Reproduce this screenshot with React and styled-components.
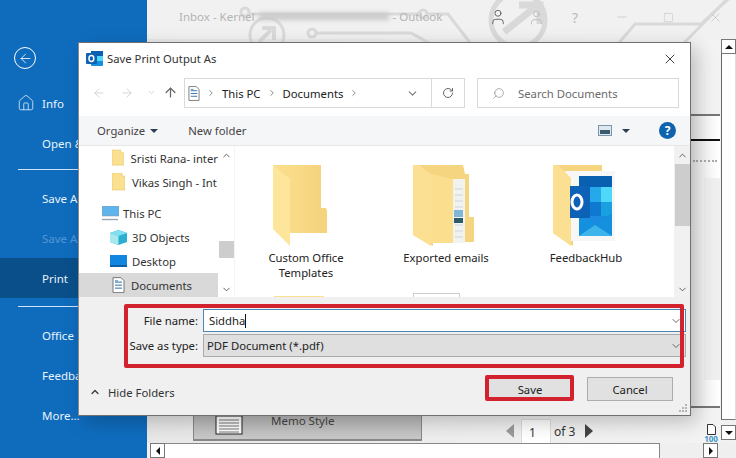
import React from 'react';
import styled, { createGlobalStyle } from 'styled-components';
import { ArrowLeft, ArrowRight, ArrowUp, ChevronDown, ChevronUp, Home, RotateCw, Search, X, User, Minus, Square, ChevronRight } from 'lucide-react';

const Global = createGlobalStyle`
  html, body { margin: 0; padding: 0; background: #f0f0f0; }
  * { box-sizing: border-box; }
  #root { width: 736px; height: 458px; overflow: hidden; }
`;

const Page = styled.div`
  position: relative; width: 736px; height: 458px; display: flex; overflow: hidden;
  font-family: "Noto Sans", "Open Sans", sans-serif; font-size: 11.3px; color: #222;
`;

/* backstage sidebar */
const Sidebar = styled.aside`
  width: 147px; flex: none; background: #0f6cbd; color: #e8f2fb; display: flex; flex-direction: column; padding-top: 47px; font-size: 11.5px;
`;
const BackButton = styled.div`
  width: 22px; height: 22px; margin: 0 0 14px 14px; border: 1.5px solid #fff; border-radius: 50%;
  display: flex; align-items: center; justify-content: center; color: #fff;
`;
const SideItem = styled.div`
  height: 40px; flex: none; display: flex; align-items: center; padding-left: 42px; position: relative;
  margin-top: ${p => p.$mt || 0}px;
  color: ${p => (p.$dim ? '#4f97d6' : '#e9f3fb')};
  background: ${p => (p.$active ? '#0a4f8a' : 'transparent')};
`;
const HomeIcon = styled.span`
  position: absolute; left: 17px; top: 11px; display: flex; color: #dcecf9;
`;
const SideRule = styled.div`
  height: 1px; background: #cfe3f5; margin: ${p => p.$m} 0 0 18px; flex: none;
`;

/* outlook window behind the dialog */
const Main = styled.main`
  flex: 1; display: flex; flex-direction: column; min-width: 0; background: #f1f1f1; position: relative;
`;
const TitleBar = styled.header`
  height: 39px; flex: none; position: relative; display: flex; align-items: flex-start; padding: 9px 0 0 32px;
  color: #b4b4b4; font-size: 11.5px;
`;
const TitleArt = styled.svg`
  position: absolute; left: 0; top: 0; width: 589px; height: 60px;
`;
const TitleText = styled.span`
  position: relative; white-space: nowrap; display: flex; align-items: center;
`;
const Blurred = styled.span`
  display: inline-block; width: 130px; height: 7px; margin: 0 4px; background: #c8c8c8; filter: blur(2.5px);
`;
const WinIcons = styled.div`
  position: absolute; top: 8px; left: 338px; display: flex; align-items: center; height: 18px; color: #b9b9b9; font-size: 14px;
`;
const WinIcon = styled.span`
  width: ${p => p.$w}px; flex: none; display: flex; justify-content: center; color: ${p => p.$c || 'inherit'};
`;
const PreviewRow = styled.div`
  flex: 1; display: flex; min-height: 0;
`;
const PreviewArea = styled.div`
  flex: 1; display: flex; flex-direction: column; min-width: 0;
  background: linear-gradient(90deg, #e8e8e8, #f3f3f3);
`;
const PageSliver = styled.div`
  height: 294px; margin-left: 544px; width: 29px; margin-top: 75px; background: linear-gradient(90deg,#ececec,#fff);
  border-bottom: 2px solid #777; flex: none;
`;
const PageLine = styled.div`
  height: ${p => p.$h}px; background: ${p => p.$c}; margin-top: ${p => p.$t}px;
`;
const PageDots = styled.div`
  height: 2px; margin: 19px 0 0 2px; width: 24px; border-top: 2px dotted #aaa;
`;
const PageBlock = styled.div`
  height: 202px; margin: 16px 0 0 13px; background: #efefef;
`;
const FootRow = styled.div`
  height: 30px; margin-top: auto; flex: none; display: flex; align-items: flex-start; position: relative;
`;
const MemoTab = styled.div`
  width: 229px; height: 28px; margin-left: 46px; background: linear-gradient(#b4b4b4, #c9c9c9);
  border: 1px solid #888; border-top: 0; border-bottom-width: 2px; display: flex; align-items: flex-start; padding: 3px 0 0 21px;
  color: #444; font-size: 11.5px; line-height: 10px;
`;
const MemoGlyph = styled.svg`
  width: 28px; height: 19px; margin-right: 28px; flex: none;
`;
const Pager = styled.div`
  display: flex; align-items: center; margin: 6px 0 0 84px; color: #333; font-size: 12px; height: 24px;
`;
const PagerArrow = styled.span`
  width: 0; height: 0; border-top: 7px solid transparent; border-bottom: 7px solid transparent;
  ${p => p.$left ? 'border-right: 8px solid #9a9a9a;' : 'border-left: 8px solid #444;'}
`;
const PagerBox = styled.span`
  width: 30px; height: 24px; background: #fff; border: 1px solid #ddd; border-bottom: 0; margin: 0 3px 0 7px; padding: 4px 0 0 7px;
`;
const PagerOf = styled.span`
  margin-right: 10px;
`;
const Zoomer = styled.div`
  position: absolute; left: 554px; top: 11px; width: 20px; display: flex; flex-direction: column; align-items: center;
  color: #3d93c8; font-size: 8px; font-weight: 700; line-height: 8px;
`;
const ScrollBarV = styled.div`
  width: 15px; flex: none; display: flex; flex-direction: column; padding-bottom: 3px;
`;
const ScrollTrack = styled.div`
  flex: 1; background: #fff; border-left: 1px solid #666; border-bottom: 1px solid #777; border-right: 1px solid #ddd; margin-bottom: 5px;
`;
const ScrollBtn = styled.div`
  width: 15px; height: 15px; flex: none; background: #fff; border: 1px solid #777; display: flex; align-items: center; justify-content: center;
`;
const Tri = styled.span`
  width: 0; height: 0;
  ${p => p.$d === 'up' && 'border-left:4px solid transparent;border-right:4px solid transparent;border-bottom:4px solid #111;'}
  ${p => p.$d === 'down' && 'border-left:4px solid transparent;border-right:4px solid transparent;border-top:4px solid #111;'}
  ${p => p.$d === 'left' && 'border-top:4px solid transparent;border-bottom:4px solid transparent;border-right:4px solid #111;'}
  ${p => p.$d === 'right' && 'border-top:4px solid transparent;border-bottom:4px solid transparent;border-left:4px solid #111;'}
`;
const ScrollBarH = styled.div`
  height: 15px; flex: none; display: flex; margin-left: 3px; background: #efefef;
`;
const HTrack = styled.div`
  width: 495px; background: #fff; border: 1px solid #888; border-left: 0; border-bottom: 0;
`;
const HSpacer = styled.div`
  width: 43px;
`;

/* dialog */
const Dialog = styled.section`
  position: absolute; left: 78px; top: 42px; width: 613px; height: 374px; background: #fff;
  border: 1px solid #6f6f6f; border-left-color: #8a8a8a; box-shadow: 6px 6px 18px rgba(0,0,0,.22);
  display: flex; flex-direction: column;
`;
const DialogTitle = styled.div`
  height: 31px; flex: none; display: flex; align-items: center; padding: 0 12px 0 7px; color: #333; gap: 4px;
`;
const TitleLabel = styled.span`
  flex: 1;
`;
const AddressRow = styled.div`
  height: 42px; flex: none; display: flex; align-items: flex-start; padding: 4px 11px 0 10px; color: #bbb;
`;
const NavBtn = styled.span`
  width: ${p => p.$w}px; height: 29px; display: flex; align-items: center; justify-content: center; color: ${p => p.$c || '#c4c4c4'};
`;
const AddressBox = styled.div`
  width: 281px; height: 30px; margin-left: 3px; border: 1px solid #d9d9d9; display: flex; align-items: center; padding-left: 3px; color: #222;
`;
const Crumb = styled.span`
  display: flex; color: #777; margin: 0 6px;
`;
const AddrEnd = styled.span`
  margin-left: auto; display: flex; align-items: center; height: 100%; color: #777;
`;
const AddrRefresh = styled.span`
  width: 33px; height: 100%; border-left: 1px solid #d9d9d9; margin-left: 12px; display: flex; align-items: center; justify-content: center; color: #666;
`;
const SearchBox = styled.div`
  width: 202px; height: 30px; margin-left: 12px; border: 1px solid #d9d9d9; display: flex; align-items: center; padding-left: 14px; gap: 13px; color: #6b6b6b;
`;
const Toolbar = styled.div`
  height: 30px; flex: none; background: #f5f6f7; border-bottom: 1px solid #e7e7e7; display: flex; align-items: center; padding: 0 14px 0 18px; color: #444;
`;
const Caret = styled.span`
  width: 0; height: 0; border-left: 4px solid transparent; border-right: 4px solid transparent; border-top: 4px solid #2c3e55; margin-left: ${p => p.$ml}px;
`;
const ToolNew = styled.span`
  margin-left: 30px; margin-right: auto;
`;
const ViewIcon = styled.svg`
  width: 14px; height: 11px; flex: none;
`;
const HelpBadge = styled.span`
  width: 17px; height: 17px; border-radius: 50%; background: #0d63ad; color: #fff; font-weight: 700; font-size: 12px; display: flex; align-items: center; justify-content: center; margin-left: 29px;
`;
const Body = styled.div`
  flex: 1; min-height: 0; display: flex; overflow: hidden;
`;
const Nav = styled.nav`
  width: 139px; flex: none; margin-right: 1px; display: flex; flex-direction: column; overflow: hidden;
`;
const NavRow = styled.div`
  height: 24px; flex: none; display: flex; align-items: center; padding-left: ${p => p.$pl}px; gap: ${p => p.$gap || 5}px; white-space: nowrap; overflow: hidden;
  margin-top: ${p => p.$mt || 0}px; color: #333;
  background: ${p => (p.$sel ? '#d9d9d9' : 'transparent')};
`;
const NavScroll = styled.div`
  width: 15px; flex: none; background: #fff; display: flex; flex-direction: column; align-items: center; color: #555; padding: 4px 0 2px;
`;
const NavThumb = styled.div`
  width: 15px; height: 17px; background: #cdcdcd; margin: 80px 0 auto;
`;
const Files = styled.div`
  flex: 1; min-width: 0; display: grid; grid-template-columns: repeat(3, 140px); grid-auto-rows: 147px; padding: 0 0 0 1px; overflow: hidden; border-left: 1px solid #f4f4f4;
`;
const FileCell = styled.div`
  display: flex; flex-direction: column; align-items: center; padding-top: ${p => p.$top ?? 19}px; text-align: center; line-height: 15px; color: #222;
`;
const FileIcon = styled.div`
  height: 81px; margin-right: ${p => p.$shift || 0}px; flex: none; display: flex;
`;
const FileLabel = styled.span`
  margin-top: 4px;
`;
const FileScroll = styled.div`
  width: 16px; flex: none; background: #f1f1f1; display: flex; flex-direction: column; align-items: center; color: #555; padding: 4px 0 2px;
`;
const FileThumb = styled.div`
  width: 15px; height: 62px; background: #cdcdcd; margin: 3px 0 auto;
`;
const Bottom = styled.div`
  height: 118px; flex: none; background: #f0f0f0; position: relative; padding: 12px 0 0 0;
`;
const FieldRow = styled.div`
  display: flex; align-items: center; height: 23px; margin-bottom: 2px;
`;
const FieldLabel = styled.label`
  width: 119px; text-align: right; color: #222; flex: none;
`;
const NameInput = styled.div`
  width: 483px; height: 23px; margin-left: 5px; background: #fff; border: 1px solid #4a86b8; display: flex; align-items: center; padding-left: 5px; justify-content: space-between; color: #222;
`;
const Cursor = styled.span`
  display: inline-block; width: 1px; height: 14px; background: #111; vertical-align: -3px;
`;
const TypeSelect = styled(NameInput)`
  background: #dfdfdf; border-color: #aaa; padding-left: 3px;
`;
const SelectCaret = styled.span`
  display: flex; color: #666; margin-right: 3px;
`;
const ButtonRow = styled.div`
  display: flex; align-items: center; margin-top: 20px; padding: 0 17px 0 10px; height: 24px;
`;
const HideFolders = styled.div`
  display: flex; align-items: center; gap: 7px; margin-right: auto; color: #333; margin-top: 6px;
`;
const DlgButton = styled.button`
  width: 86px; height: 24px; background: #e1e1e1; border: 1px solid #adadad; font: inherit; color: #222; padding: 0; margin-left: ${p => p.$ml || 0}px;
`;
const RedBox = styled.div`
  position: absolute; left: ${p => p.$l}px; top: ${p => p.$t}px; width: ${p => p.$w}px; height: ${p => p.$h}px;
  border: 4px solid #d1222e; border-radius: 2px; pointer-events: none;
`;
const Grip = styled.svg`
  position: absolute; right: 2px; bottom: 2px; width: 9px; height: 9px;
`;
const PeekFolder = styled.div`
  width: 50px; height: 2px; background: #fbdf8e; margin-right: 14px;
`;
const PeekPaper = styled.div`
  width: 47px; height: 5px; background: #fff; border: 1px solid #ccc; border-bottom: 0; margin-right: 20px;
`;

const Folder = () => (
  <svg width="54" height="81" viewBox="0 0 54 81">
    <defs>
      <linearGradient id="fa" x1="0" x2="1"><stop offset="0" stopColor="#fbe08f" /><stop offset="1" stopColor="#f5d27c" /></linearGradient>
    </defs>
    <path d="M0 0H48V43H53L54 46V68H17V81Z" fill="url(#fa)" />
    <path d="M0 0L17 14V81L0 64Z" fill="#fde59b" />
  </svg>
);
const FolderDocs = () => (
  <svg width="62" height="81" viewBox="0 0 62 81">
    <path d="M0 0H50L52 9H56V52H61V77H20V81L0 70Z" fill="#f6d581" />
    <path d="M0 0H6L18 9V81L0 70Z" fill="#fbe093" />
    <path d="M18 9 L40 14V78H18Z" fill="#fbdf8f" />
    <path d="M40 14H52V78H40Z" fill="#f2f2ee" />
    <path d="M42 24H50M42 30H50M42 36H50M42 42H50M42 60H50M42 66H50M42 72H50" stroke="#cfd5da" />
    <rect x="41" y="45" width="9" height="7" fill="#7fb6d8" />
    <rect x="41" y="53" width="9" height="5" fill="#2f5a6a" />
    <path d="M52 52H61V77H52Z" fill="#f6d581" />
  </svg>
);
const FolderOutlook = () => (
  <svg width="66" height="81" viewBox="0 0 66 81">
    <path d="M0 0H49V8H60V73H20V81L0 68Z" fill="#f6d581" />
    <path d="M12 6H62V76H18Z" fill="#f7f7f7" />
    <path d="M0 0H5L18 13V81L0 68Z" fill="#fbe093" />
    <rect x="26" y="11" width="33" height="60" rx="2" fill="#1a8be0" />
    <rect x="26" y="11" width="33" height="11" fill="#0a60b0" />
    <rect x="36" y="22" width="12" height="15" fill="#27a8ea" />
    <rect x="48" y="22" width="11" height="15" fill="#50d8fb" />
    <rect x="48" y="37" width="11" height="14" fill="#18a0e0" />
    <rect x="36" y="37" width="12" height="14" fill="#0f78d0" />
    <path d="M26 48 L42 60 L59 48 V71H26Z" fill="#1490df" />
    <path d="M42 60 L59 71 H26Z" fill="#3db4ea" />
    <rect x="17" y="21" width="20" height="32" fill="#0d62b8" />
    <ellipse cx="24" cy="37" rx="5" ry="7" fill="none" stroke="#fff" strokeWidth="3" />
  </svg>
);
const SmallFolder = () => (
  <svg width="13" height="18" viewBox="0 0 13 18"><path d="M0 0H10V3H13V17H0Z" fill="#fbe08f" stroke="#e6c670" strokeWidth=".6" /></svg>
);
const DocIcon = ({ size = 13 }) => (
  <svg width={size} height={size * 1.25} viewBox="0 0 13 16">
    <path d="M1 .5H9L12 3.5V15.5H1Z" fill="#fff" stroke="#777" />
    <path d="M3 5H10M3 8H10M3 11H10" stroke="#2f6fa8" />
    <rect x="3" y="3" width="3" height="1.5" fill="#67a7d6" />
  </svg>
);
const PcIcon = () => (
  <svg width="17" height="15" viewBox="0 0 17 15"><rect x="0" y="0" width="17" height="10" fill="#5fb4ec" stroke="#8a9aa8" strokeWidth=".6" /><path d="M0 13.5H16" stroke="#9aa6b0" strokeWidth="1.4" /></svg>
);
const CubeIcon = () => (
  <svg width="17" height="15" viewBox="0 0 17 15"><path d="M8.5 0L17 3V12L8.5 15L0 12V3Z" fill="#2aaed2" /><path d="M8.5 0L17 3L8.5 6L0 3Z" fill="#7fe0ef" /><path d="M0 3L8.5 6V15L0 12Z" fill="#a7e7ee" /></svg>
);
const DesktopIcon = () => (
  <svg width="17" height="13" viewBox="0 0 17 13"><rect width="17" height="12" fill="#1186e0" /><path d="M0 10H17V12H0Z" fill="#0d5fa8" /></svg>
);
const OutlookLogo = () => (
  <svg width="17" height="17" viewBox="0 0 17 17">
    <rect x="5" y="1" width="12" height="15" rx="1" fill="#1490df" />
    <rect x="5" y="1" width="12" height="5" fill="#0a60b0" />
    <rect x="11" y="6" width="6" height="5" fill="#50d8fb" />
    <rect x="0" y="3" width="11" height="11" rx="1" fill="#0f62b4" />
    <ellipse cx="5.4" cy="8.5" rx="2.4" ry="3" fill="none" stroke="#fff" strokeWidth="1.5" />
  </svg>
);

export default function App() {
  return (
    <Page>
      <Global />
      <Sidebar>
        <BackButton><ArrowLeft size={15} strokeWidth={1.3} /></BackButton>
        <SideItem><HomeIcon><Home size={18} strokeWidth={1.1} /></HomeIcon>Info</SideItem>
        <SideItem>Open &amp;</SideItem>
        <SideRule $m="6px" />
        <SideItem $mt={8}>Save A</SideItem>
        <SideItem $dim>Save A</SideItem>
        <SideItem $active>Print</SideItem>
        <SideRule $m="8px" />
        <SideItem $mt={8}>Office</SideItem>
        <SideItem>Feedba</SideItem>
        <SideItem>More...</SideItem>
      </Sidebar>
      <Main>
        <TitleBar>
          <TitleArt viewBox="0 0 589 60" fill="none">
            <g stroke="#d9d9d9" strokeWidth="3">
              <circle cx="120" cy="35" r="17" />
              <path d="M112 42L124 30M115 28H127V40" strokeWidth="4" />
              <path d="M165 33H264L284 44" />
              <circle cx="165" cy="33" r="4" fill="#f1f1f1" />
              <circle cx="98" cy="12" r="4" fill="#f1f1f1" />
              <path d="M102 14H301L324 44" />
              <circle cx="276" cy="14" r="4" fill="#f1f1f1" />
              <circle cx="371" cy="20" r="27" strokeWidth="5" />
              <path d="M357 32L391 5M372 5H393V24" strokeWidth="7" />
              <path d="M471 44L488 24H554L589 -8" />
              <path d="M536 44L589 -10" />
            </g>
          </TitleArt>
          <TitleText>Inbox - Kernel<Blurred />- Outlook</TitleText>
          <WinIcons>
            <WinIcon $w={25} $c="#666"><User size={18} strokeWidth={1.3} /></WinIcon>
            <WinIcon $w={52}><User size={17} strokeWidth={1.3} /></WinIcon>
            <WinIcon $w={26}>?</WinIcon>
            <WinIcon $w={68}><Minus size={14} strokeWidth={1} /></WinIcon>
            <WinIcon $w={24}><Square size={11} strokeWidth={1} /></WinIcon>
            <WinIcon $w={70}><X size={15} strokeWidth={1} /></WinIcon>
          </WinIcons>
        </TitleBar>
        <PreviewRow>
          <PreviewArea>
            <PageSliver>
              <PageLine $h={2} $c="#777" $t={0} />
              <PageLine $h={2} $c="#111" $t={23} />
              <PageDots />
              <PageBlock />
            </PageSliver>
            <FootRow>
              <MemoTab>
                <MemoGlyph viewBox="0 0 28 19"><rect x="1" y="0" width="26" height="18" fill="#fff" stroke="#222" /><path d="M4 4H24M4 7H24M4 10H24M4 13H24M4 16H24" stroke="#777" /></MemoGlyph>
                Memo Style
              </MemoTab>
              <Pager>
                <PagerArrow $left />
                <PagerBox>1</PagerBox>
                <PagerOf>of 3</PagerOf>
                <PagerArrow />
              </Pager>
              <Zoomer>
                <svg width="9" height="11" viewBox="0 0 9 11"><path d="M.5.5H6L8.5 3V10.5H.5Z" fill="#fff" stroke="#333" /></svg>
                100
              </Zoomer>
            </FootRow>
          </PreviewArea>
          <ScrollBarV>
            <ScrollBtn><Tri $d="up" /></ScrollBtn>
            <ScrollTrack />
            <ScrollBtn><Tri $d="down" /></ScrollBtn>
          </ScrollBarV>
        </PreviewRow>
        <ScrollBarH>
          <ScrollBtn><Tri $d="left" /></ScrollBtn>
          <HTrack />
          <HSpacer />
          <ScrollBtn><Tri $d="right" /></ScrollBtn>
        </ScrollBarH>
      </Main>
      <Dialog>
        <DialogTitle>
          <OutlookLogo />
          <TitleLabel>Save Print Output As</TitleLabel>
          <X size={16} strokeWidth={1.2} color="#111" />
        </DialogTitle>
        <AddressRow>
          <NavBtn $w={20}><ArrowLeft size={14} strokeWidth={1.2} /></NavBtn>
          <NavBtn $w={35}><ArrowRight size={14} strokeWidth={1.2} /></NavBtn>
          <NavBtn $w={15}><ChevronDown size={9} /></NavBtn>
          <NavBtn $w={22} $c="#666"><ArrowUp size={15} strokeWidth={2} /></NavBtn>
          <AddressBox>
            <DocIcon size={12} />
            <Crumb><ChevronRight size={10} /></Crumb>This PC
            <Crumb><ChevronRight size={10} /></Crumb>Documents
            <Crumb><ChevronRight size={10} /></Crumb>
            <AddrEnd>
              <ChevronDown size={13} strokeWidth={2} />
              <AddrRefresh><RotateCw size={12} strokeWidth={2} /></AddrRefresh>
            </AddrEnd>
          </AddressBox>
          <SearchBox>
            <Search size={13} strokeWidth={1} style={{ transform: 'scaleX(-1)' }} />
            Search Documents
          </SearchBox>
        </AddressRow>
        <Toolbar>
          Organize<Caret $ml={5} />
          <ToolNew>New folder</ToolNew>
          <ViewIcon viewBox="0 0 14 11"><rect x=".5" y=".5" width="13" height="10" fill="#dfe8ef" stroke="#7d95a8" /><rect x="2" y="5" width="10" height="4" fill="#3a5a70" /></ViewIcon>
          <Caret $ml={10} />
          <HelpBadge>?</HelpBadge>
        </Toolbar>
        <Body>
          <Nav>
            <NavRow $pl={33} $gap={7}><SmallFolder />Sristi Rana- inter</NavRow>
            <NavRow $pl={33} $gap={7}><SmallFolder />Vikas Singh - Int</NavRow>
            <NavRow $pl={23} $gap={4} $mt={7}><PcIcon />This PC</NavRow>
            <NavRow $pl={31}><CubeIcon />3D Objects</NavRow>
            <NavRow $pl={31}><DesktopIcon />Desktop</NavRow>
            <NavRow $pl={33} $gap={6} $sel><DocIcon />Documents</NavRow>
          </Nav>
          <NavScroll>
            <ChevronUp size={11} strokeWidth={2} />
            <NavThumb />
            <ChevronDown size={11} strokeWidth={2} />
          </NavScroll>
          <Files>
            <FileCell><FileIcon $shift={12}><Folder /></FileIcon><FileLabel>Custom Office<br />Templates</FileLabel></FileCell>
            <FileCell><FileIcon $shift={5}><FolderDocs /></FileIcon><FileLabel>Exported emails</FileLabel></FileCell>
            <FileCell><FileIcon><FolderOutlook /></FileIcon><FileLabel>FeedbackHub</FileLabel></FileCell>
            <FileCell $top={3}><PeekFolder /></FileCell>
            <FileCell $top={0}><PeekPaper /></FileCell>
          </Files>
          <FileScroll>
            <ChevronUp size={11} strokeWidth={2} />
            <FileThumb />
            <ChevronDown size={11} strokeWidth={2} />
          </FileScroll>
        </Body>
        <Bottom>
          <FieldRow>
            <FieldLabel>File name:</FieldLabel>
            <NameInput><span>Siddha<Cursor /></span><SelectCaret><ChevronDown size={12} /></SelectCaret></NameInput>
          </FieldRow>
          <FieldRow>
            <FieldLabel>Save as type:</FieldLabel>
            <TypeSelect>PDF Document (*.pdf)<SelectCaret><ChevronDown size={12} /></SelectCaret></TypeSelect>
          </FieldRow>
          <ButtonRow>
            <HideFolders><ChevronUp size={12} strokeWidth={2.4} />Hide Folders</HideFolders>
            <DlgButton>Save</DlgButton>
            <DlgButton $ml={14}>Cancel</DlgButton>
          </ButtonRow>
          <RedBox $l={45} $t={7} $w={560} $h={64} />
          <RedBox $l={406} $t={78} $w={89} $h={26} />
          <Grip viewBox="0 0 9 9" fill="#b5b5b5"><rect x="6" y="0" width="2" height="2" /><rect x="3" y="3" width="2" height="2" /><rect x="6" y="3" width="2" height="2" /><rect x="0" y="6" width="2" height="2" /><rect x="3" y="6" width="2" height="2" /><rect x="6" y="6" width="2" height="2" /></Grip>
        </Bottom>
      </Dialog>
    </Page>
  );
}
